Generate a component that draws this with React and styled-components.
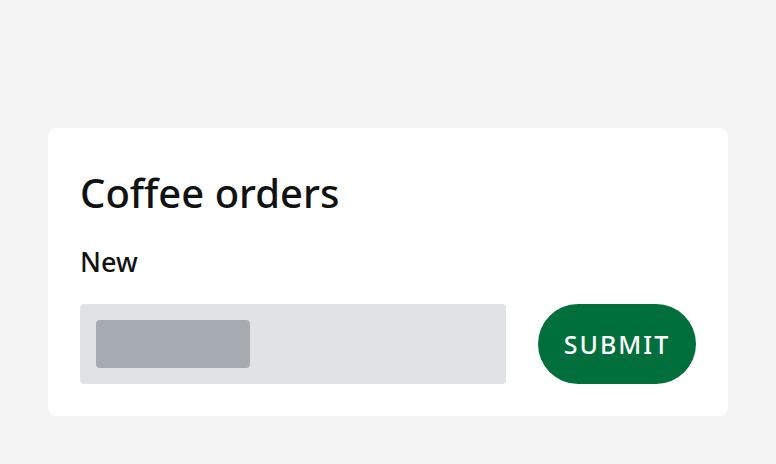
import { createGlobalStyle, styled } from "styled-components";

const GlobalStyle = createGlobalStyle`
  html, body {
    margin: 0;
    padding: 0;
    background-color: #f3f3f3;
    font-family: "Noto Sans", "Open Sans", sans-serif;
  }
`;

const Page = styled.div`
  padding: 128px 48px 48px;
`;

const Card = styled.section`
  background-color: #ffffff;
  border-radius: 8px;
  padding: 32px;
  height: 288px;
  box-sizing: border-box;
  display: flex;
  flex-direction: column;
`;

const Title = styled.h1`
  margin: 0;
  font-size: 40px;
  line-height: 66px;
  font-weight: 500;
  color: #111313;
`;

const Label = styled.label`
  margin-top: 18px;
  font-size: 27px;
  line-height: 36px;
  font-weight: 500;
  color: #111313;
`;

const Row = styled.div`
  margin-top: 24px;
  display: flex;
  align-items: center;
  gap: 32px;
`;

const Field = styled.div`
  width: 426px;
  height: 80px;
  box-sizing: border-box;
  padding: 16px;
  background-color: #e1e2e4;
  border-radius: 4px;
`;

const Skeleton = styled.div`
  width: 154px;
  height: 48px;
  background-color: #a6abb2;
  border-radius: 4px;
`;

const SubmitButton = styled.button`
  width: 158px;
  height: 80px;
  padding: 0;
  border: none;
  border-radius: 40px;
  background-color: #006f3c;
  color: #ffffff;
  font-family: "Noto Sans", "Open Sans", sans-serif;
  font-size: 25px;
  font-weight: 500;
  letter-spacing: 2px;
  cursor: pointer;
`;

export default function App() {
  return (
    <>
      <GlobalStyle />
      <Page>
        <Card>
          <Title>Coffee orders</Title>
          <Label>New</Label>
          <Row>
            <Field>
              <Skeleton />
            </Field>
            <SubmitButton>SUBMIT</SubmitButton>
          </Row>
        </Card>
      </Page>
    </>
  );
}
